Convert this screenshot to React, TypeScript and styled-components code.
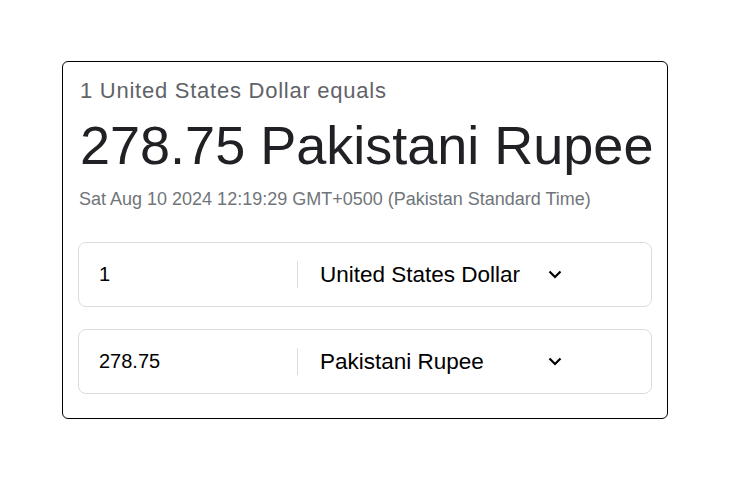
import React from "react";
import styled, { createGlobalStyle } from "styled-components";

const Global = createGlobalStyle`
  html, body { margin: 0; padding: 0; background: #fff; }
  body { font-family: "Liberation Sans", Arial, sans-serif; }
`;

const Page = styled.div`
  padding: 61px 0 0 62px;
`;

const Card = styled.div`
  width: 574px;
  border: 1px solid #000;
  border-radius: 6px;
  padding: 17px 15px 24px 15px;
  display: flex;
  flex-direction: column;
`;

const Lead = styled.div`
  font-size: 22px;
  line-height: 24px;
  letter-spacing: 0.75px;
  color: #5f6368;
  padding-left: 2px;
`;

const Result = styled.div`
  font-size: 54px;
  line-height: 62px;
  color: #202124;
  margin-top: 11px;
  padding-left: 2px;
  white-space: nowrap;
`;

const Stamp = styled.div`
  font-size: 18px;
  line-height: 20px;
  color: #70757a;
  margin-top: 13px;
  padding-left: 1px;
`;

const Rows = styled.div`
  display: flex;
  flex-direction: column;
  gap: 22px;
  margin-top: 33px;
`;

const Row = styled.div`
  display: flex;
  align-items: center;
  height: 63px;
  border: 1px solid #dadce0;
  border-radius: 8px;
  padding-left: 20px;
`;

const Amount = styled.div`
  width: 198px;
  font-size: 20px;
  color: #000;
`;

const Divider = styled.div`
  width: 1px;
  height: 27px;
  background: #dadce0;
`;

const Select = styled.div`
  display: flex;
  align-items: center;
  justify-content: space-between;
  width: 242px;
  padding-left: 22px;
  font-size: 22.5px;
  color: #000;
`;

const Chevron = () => (
  <svg width="14" height="9" viewBox="0 0 14 9" fill="none">
    <path d="M1.5 1.5 L7 7 L12.5 1.5" stroke="#000" strokeWidth="2.2" />
  </svg>
);

const rows = [
  { amount: "1", currency: "United States Dollar" },
  { amount: "278.75", currency: "Pakistani Rupee" },
];

export default function App() {
  return (
    <>
      <Global />
      <Page>
        <Card>
          <Lead>1 United States Dollar equals</Lead>
          <Result>278.75 Pakistani Rupee</Result>
          <Stamp>Sat Aug 10 2024 12:19:29 GMT+0500 (Pakistan Standard Time)</Stamp>
          <Rows>
            {rows.map((r) => (
              <Row key={r.currency}>
                <Amount>{r.amount}</Amount>
                <Divider />
                <Select>
                  <span>{r.currency}</span>
                  <Chevron />
                </Select>
              </Row>
            ))}
          </Rows>
        </Card>
      </Page>
    </>
  );
}
